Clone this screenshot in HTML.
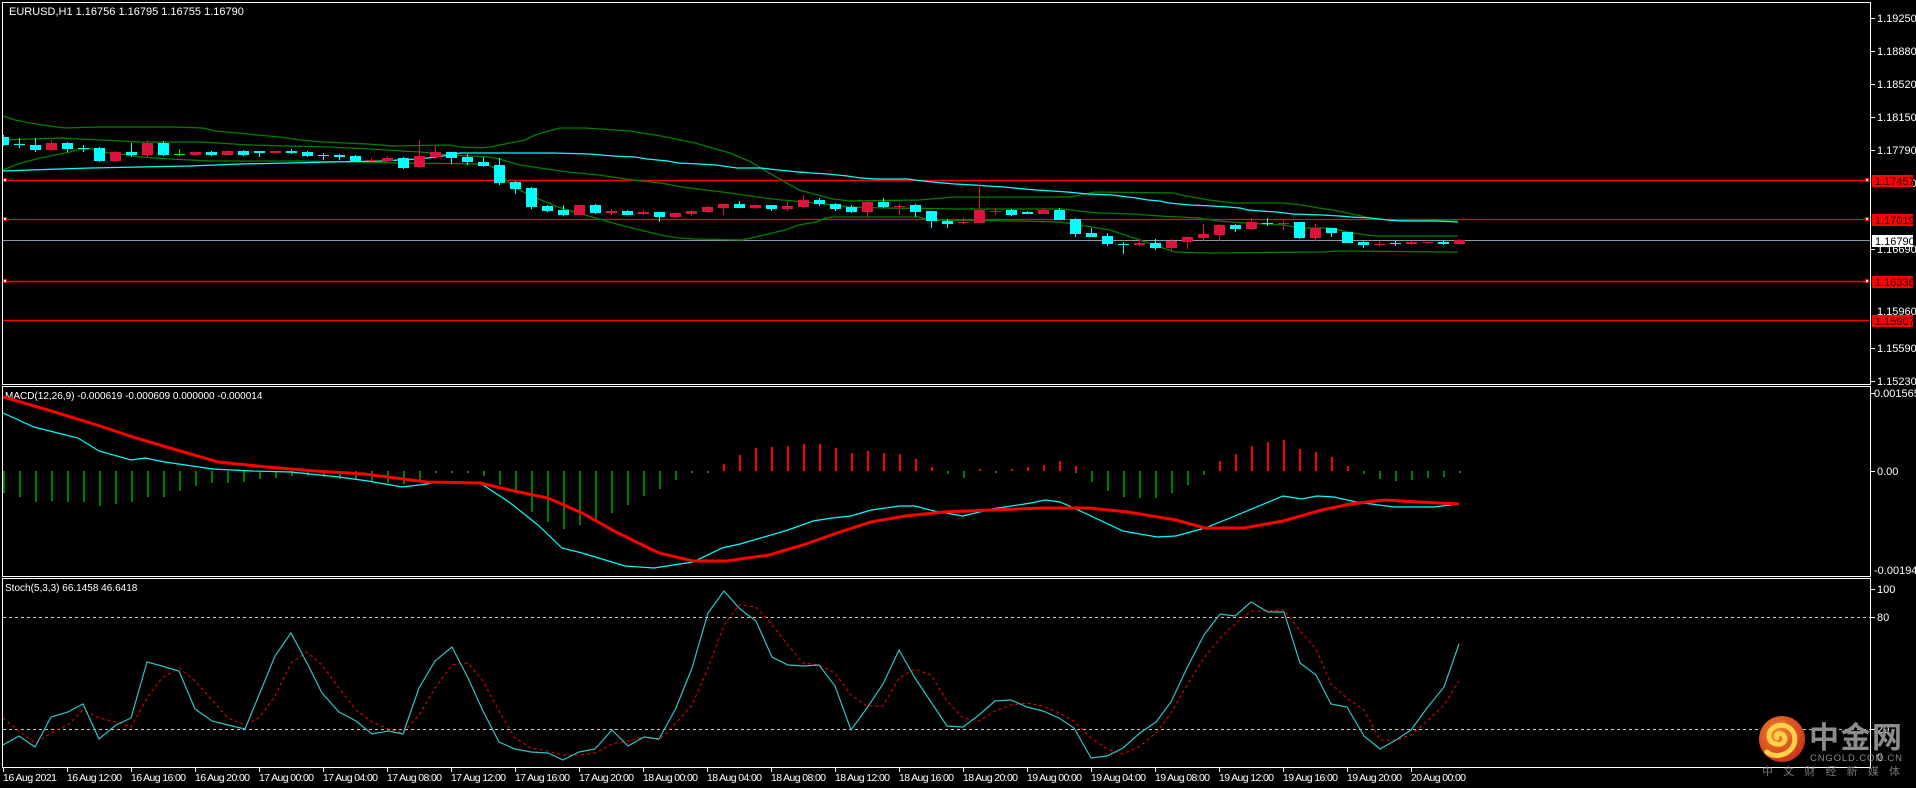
<!DOCTYPE html>
<html><head><meta charset="utf-8"><style>
html,body{margin:0;padding:0;background:#000;width:1916px;height:788px;overflow:hidden}
svg{display:block}
text{font-family:"Liberation Sans","Noto Sans CJK SC",sans-serif}
</style></head><body>
<svg width="1916" height="788" viewBox="0 0 1916 788" xmlns="http://www.w3.org/2000/svg">
<defs>
<clipPath id="cm"><rect x="3" y="3" width="1867" height="381"/></clipPath>
<clipPath id="cd"><rect x="3" y="387" width="1867" height="189"/></clipPath>
<clipPath id="cs"><rect x="3" y="579" width="1867" height="188"/></clipPath>
<radialGradient id="lg" cx="40%" cy="35%" r="70%"><stop offset="0" stop-color="#f5852a"/><stop offset="1" stop-color="#c8301a"/></radialGradient>
</defs>
<rect width="1916" height="788" fill="#000"/>
<!-- frames -->
<g fill="none" stroke="#fff" stroke-width="1">
<rect x="2.5" y="2.5" width="1868" height="382"/>
<rect x="2.5" y="386.5" width="1868" height="190"/>
<rect x="2.5" y="578.5" width="1868" height="189"/>
</g>
<text x="9" y="15" fill="#fff" font-size="11">EURUSD,H1  1.16756 1.16795 1.16755 1.16790</text>

<g clip-path="url(#cm)">
<!-- horizontal levels -->
<line x1="3" y1="180.5" x2="1870" y2="180.5" stroke="#f00" stroke-width="1.6"/>
<line x1="3" y1="219.5" x2="1870" y2="219.5" stroke="#f00" stroke-width="1.2"/>
<line x1="3" y1="240.5" x2="1870" y2="240.5" stroke="#8a9aaa" stroke-width="1"/>
<line x1="3" y1="281.5" x2="1870" y2="281.5" stroke="#f00" stroke-width="1.6"/>
<line x1="3" y1="320.5" x2="1870" y2="320.5" stroke="#f00" stroke-width="1.6"/>
<!-- bollinger -->
<g fill="none" stroke="#008000" stroke-width="1.3">
<polyline points="3,116 15,120 30,123 50,126 65,128 97,127 173,127 203,128 215,131 237,133 257,135 280,137 300,140 323,142 367,144 393,146 450,145 460,147 480,148 490,147 510,143 525,140 535,135 545,132 560,128 585,128 600,129 630,131 661,136 695,143 730,153 751,162 764,170 799,190 833,199 850,201 919,200 954,197 1070,197 1095,192 1174,193 1181,195 1209,200 1233,203 1284,203 1301,205 1319,208 1333,210 1343,212 1357,215 1370,218 1388,220 1458,220"/>
<polyline points="3,140 60,138 100,140 140,142 200,142 250,145 330,147 370,149 420,152 450,155 489,157 499,159 520,165 540,168 568,172 599,175 633,180 661,183 682,187 706,190 730,193 757,197 782,200 816,203 850,207 885,208 960,209 1064,209 1078,211 1100,213 1133,214 1160,216 1198,218 1218,221 1245,223 1284,225 1300,228 1330,228 1353,233 1374,236 1458,236"/>
<polyline points="3,170 15,165 25,162 40,158 55,155 70,152 80,149 92,149 100,152 120,154 140,157 170,159 210,161 300,161 350,162 400,163 485,164 494,168 503,177 513,187 534,197 558,207 592,217 620,225 640,230 661,235 678,238 695,239 742,240 751,238 764,235 785,230 799,225 816,222 826,218 833,217 919,217 930,220 1020,221 1060,222 1080,225 1110,230 1140,240 1160,247 1175,252 1210,253 1320,252 1340,251 1458,252"/>
</g>
<polyline fill="none" stroke="#00ffff" stroke-width="1.3" points="3,171 30,170 60,169 90,168 140,167 190,166 240,164 290,163 330,162 380,161 420,159 450,155 460,153 554,153 589,154 613,156 635,157 647,159 668,161 678,163 699,164 716,165 730,167 737,168 761,168 778,170 799,172 811,173 828,174 847,176 861,178 876,179 907,179 923,181 943,183 955,184 973,185 988,186 1004,187 1024,189 1036,190 1052,191 1067,192 1088,194 1112,195 1128,197 1136,198 1148,200 1160,201 1169,203 1179,204 1191,205 1212,206 1228,207 1240,208 1248,210 1260,211 1277,212 1293,214 1322,215 1339,216 1351,217 1370,218 1388,220 1403,221 1436,221 1458,222"/>
<!-- candles cyan -->
<g fill="#00ffff" stroke="#00ffff">
<g stroke-width="1">
<line x1="3.5" y1="135" x2="3.5" y2="146"/><line x1="35.5" y1="138" x2="35.5" y2="152"/><line x1="67.5" y1="142" x2="67.5" y2="152"/><line x1="99.5" y1="147" x2="99.5" y2="162"/><line x1="131.5" y1="143" x2="131.5" y2="157"/><line x1="163.5" y1="141" x2="163.5" y2="156"/><line x1="211.5" y1="151" x2="211.5" y2="156"/><line x1="243.5" y1="150" x2="243.5" y2="156"/><line x1="259.5" y1="151" x2="259.5" y2="157"/><line x1="291.5" y1="149" x2="291.5" y2="154"/><line x1="307.5" y1="151" x2="307.5" y2="157"/><line x1="339.5" y1="154" x2="339.5" y2="160"/><line x1="355.5" y1="155" x2="355.5" y2="162"/><line x1="403.5" y1="157" x2="403.5" y2="169"/><line x1="451.5" y1="152" x2="451.5" y2="164"/><line x1="467.5" y1="154" x2="467.5" y2="165"/><line x1="483.5" y1="157" x2="483.5" y2="167"/><line x1="499.5" y1="158" x2="499.5" y2="185"/><line x1="515.5" y1="181" x2="515.5" y2="194"/><line x1="531.5" y1="187" x2="531.5" y2="209"/><line x1="547.5" y1="205" x2="547.5" y2="212"/><line x1="563.5" y1="205" x2="563.5" y2="216"/><line x1="595.5" y1="204" x2="595.5" y2="214"/><line x1="627.5" y1="210" x2="627.5" y2="215"/><line x1="659.5" y1="212" x2="659.5" y2="222"/><line x1="739.5" y1="201" x2="739.5" y2="208"/><line x1="771.5" y1="205" x2="771.5" y2="211"/><line x1="819.5" y1="198" x2="819.5" y2="206"/><line x1="835.5" y1="203" x2="835.5" y2="211"/><line x1="851.5" y1="205" x2="851.5" y2="213"/><line x1="883.5" y1="198" x2="883.5" y2="208"/><line x1="915.5" y1="204" x2="915.5" y2="217"/><line x1="931.5" y1="211" x2="931.5" y2="228"/><line x1="947.5" y1="219" x2="947.5" y2="228"/><line x1="1011.5" y1="209" x2="1011.5" y2="216"/><line x1="1027.5" y1="211" x2="1027.5" y2="214"/><line x1="1059.5" y1="208" x2="1059.5" y2="220"/><line x1="1075.5" y1="218" x2="1075.5" y2="237"/><line x1="1091.5" y1="228" x2="1091.5" y2="237"/><line x1="1107.5" y1="233" x2="1107.5" y2="246"/><line x1="1155.5" y1="239" x2="1155.5" y2="250"/><line x1="1235.5" y1="224" x2="1235.5" y2="232"/><line x1="1299.5" y1="222" x2="1299.5" y2="239"/><line x1="1331.5" y1="228" x2="1331.5" y2="237"/><line x1="1347.5" y1="232" x2="1347.5" y2="243"/><line x1="1363.5" y1="241" x2="1363.5" y2="248"/><line x1="1443.5" y1="240" x2="1443.5" y2="245"/>
<line x1="19.5" y1="138" x2="19.5" y2="148"/><line x1="14" y1="144.5" x2="25" y2="144.5"/>
<line x1="83.5" y1="145" x2="83.5" y2="152"/><line x1="78" y1="148.5" x2="89" y2="148.5"/>
<line x1="323.5" y1="153" x2="323.5" y2="160"/><line x1="318" y1="155.5" x2="329" y2="155.5"/>
<line x1="1123.5" y1="242" x2="1123.5" y2="254"/><line x1="1118" y1="244.5" x2="1129" y2="244.5"/>
<line x1="1267.5" y1="218" x2="1267.5" y2="226"/><line x1="1262" y1="223.5" x2="1273" y2="223.5"/>
<line x1="1395.5" y1="240" x2="1395.5" y2="246"/><line x1="1390" y1="243.5" x2="1401" y2="243.5"/>
</g>
<g stroke="none">
<rect x="-2" y="137" width="11" height="8"/><rect x="30" y="145" width="11" height="5"/><rect x="62" y="143" width="11" height="6"/><rect x="94" y="148" width="11" height="13"/><rect x="126" y="152" width="11" height="3"/><rect x="158" y="143" width="11" height="12"/><rect x="206" y="152" width="11" height="3"/><rect x="238" y="151" width="11" height="4"/><rect x="254" y="151" width="11" height="2"/><rect x="286" y="151" width="11" height="2"/><rect x="302" y="152" width="11" height="4"/><rect x="334" y="155" width="11" height="2"/><rect x="350" y="156" width="11" height="5"/><rect x="398" y="158" width="11" height="10"/><rect x="446" y="152" width="11" height="6"/><rect x="462" y="157" width="11" height="5"/><rect x="478" y="162" width="11" height="4"/><rect x="494" y="165" width="11" height="18"/><rect x="510" y="182" width="11" height="7"/><rect x="526" y="188" width="11" height="19"/><rect x="542" y="206" width="11" height="5"/><rect x="558" y="210" width="11" height="5"/><rect x="590" y="205" width="11" height="8"/><rect x="622" y="211" width="11" height="4"/><rect x="654" y="212" width="11" height="5"/><rect x="734" y="204" width="11" height="4"/><rect x="766" y="205" width="11" height="4"/><rect x="814" y="200" width="11" height="4"/><rect x="830" y="204" width="11" height="5"/><rect x="846" y="207" width="11" height="5"/><rect x="878" y="202" width="11" height="5"/><rect x="910" y="205" width="11" height="7"/><rect x="926" y="211" width="11" height="10"/><rect x="942" y="221" width="11" height="3"/><rect x="1006" y="210" width="11" height="5"/><rect x="1022" y="212" width="11" height="2"/><rect x="1054" y="210" width="11" height="10"/><rect x="1070" y="219" width="11" height="15"/><rect x="1086" y="233" width="11" height="4"/><rect x="1102" y="236" width="11" height="8"/><rect x="1150" y="243" width="11" height="5"/><rect x="1230" y="225" width="11" height="4"/><rect x="1294" y="222" width="11" height="16"/><rect x="1326" y="228" width="11" height="5"/><rect x="1342" y="232" width="11" height="11"/><rect x="1358" y="242" width="11" height="3"/><rect x="1438" y="242" width="11" height="2"/>
</g>
</g>
<g stroke="#00ff00" stroke-width="1"><line x1="179.5" y1="149" x2="179.5" y2="156"/><line x1="174" y1="154.5" x2="185" y2="154.5"/></g>
<!-- candles red -->
<g fill="#dc143c" stroke="#dc143c">
<g stroke-width="1">
<line x1="51.5" y1="140" x2="51.5" y2="151"/><line x1="115.5" y1="151" x2="115.5" y2="162"/><line x1="147.5" y1="140" x2="147.5" y2="157"/><line x1="195.5" y1="152" x2="195.5" y2="156"/><line x1="227.5" y1="150" x2="227.5" y2="155"/><line x1="275.5" y1="151" x2="275.5" y2="153"/><line x1="387.5" y1="156" x2="387.5" y2="161"/><line x1="419.5" y1="140" x2="419.5" y2="168"/><line x1="435.5" y1="145" x2="435.5" y2="159"/><line x1="579.5" y1="205" x2="579.5" y2="215"/><line x1="611.5" y1="209" x2="611.5" y2="215"/><line x1="643.5" y1="210" x2="643.5" y2="215"/><line x1="675.5" y1="213" x2="675.5" y2="218"/><line x1="691.5" y1="210" x2="691.5" y2="216"/><line x1="707.5" y1="206" x2="707.5" y2="213"/><line x1="723.5" y1="204" x2="723.5" y2="215"/><line x1="755.5" y1="204" x2="755.5" y2="209"/><line x1="787.5" y1="201" x2="787.5" y2="211"/><line x1="803.5" y1="195" x2="803.5" y2="208"/><line x1="867.5" y1="201" x2="867.5" y2="217"/><line x1="979.5" y1="183" x2="979.5" y2="223"/><line x1="1043.5" y1="208" x2="1043.5" y2="214"/><line x1="1139.5" y1="240" x2="1139.5" y2="246"/><line x1="1171.5" y1="239" x2="1171.5" y2="251"/><line x1="1187.5" y1="236" x2="1187.5" y2="249"/><line x1="1203.5" y1="224" x2="1203.5" y2="241"/><line x1="1219.5" y1="224" x2="1219.5" y2="241"/><line x1="1251.5" y1="218" x2="1251.5" y2="230"/><line x1="1315.5" y1="224" x2="1315.5" y2="241"/><line x1="1411.5" y1="241" x2="1411.5" y2="245"/><line x1="1459.5" y1="239" x2="1459.5" y2="244"/>
<line x1="371.5" y1="158" x2="371.5" y2="162"/><line x1="366" y1="160.5" x2="377" y2="160.5"/>
<line x1="899.5" y1="204" x2="899.5" y2="215"/><line x1="894" y1="206.5" x2="905" y2="206.5"/>
<line x1="963.5" y1="218" x2="963.5" y2="224"/><line x1="958" y1="222.5" x2="969" y2="222.5"/>
<line x1="995.5" y1="208" x2="995.5" y2="215"/><line x1="990" y1="211.5" x2="1001" y2="211.5"/>
<line x1="1283.5" y1="220" x2="1283.5" y2="230"/><line x1="1278" y1="223.5" x2="1289" y2="223.5"/>
<line x1="1379.5" y1="241" x2="1379.5" y2="246"/><line x1="1374" y1="244.5" x2="1385" y2="244.5"/>
<line x1="1427.5" y1="240" x2="1427.5" y2="244"/><line x1="1422" y1="242.5" x2="1433" y2="242.5"/>
</g>
<g stroke="none">
<rect x="46" y="143" width="11" height="7"/><rect x="110" y="152" width="11" height="9"/><rect x="142" y="143" width="11" height="12"/><rect x="190" y="152" width="11" height="3"/><rect x="222" y="151" width="11" height="4"/><rect x="270" y="151" width="11" height="2"/><rect x="382" y="158" width="11" height="3"/><rect x="414" y="156" width="11" height="11"/><rect x="430" y="152" width="11" height="5"/><rect x="574" y="205" width="11" height="10"/><rect x="606" y="211" width="11" height="2"/><rect x="638" y="212" width="11" height="2"/><rect x="670" y="213" width="11" height="4"/><rect x="686" y="211" width="11" height="3"/><rect x="702" y="207" width="11" height="5"/><rect x="718" y="204" width="11" height="4"/><rect x="750" y="205" width="11" height="3"/><rect x="782" y="206" width="11" height="3"/><rect x="798" y="200" width="11" height="7"/><rect x="862" y="202" width="11" height="10"/><rect x="974" y="210" width="11" height="13"/><rect x="1038" y="210" width="11" height="4"/><rect x="1134" y="243" width="11" height="2"/><rect x="1166" y="241" width="11" height="7"/><rect x="1182" y="237" width="11" height="5"/><rect x="1198" y="234" width="11" height="4"/><rect x="1214" y="225" width="11" height="10"/><rect x="1246" y="222" width="11" height="7"/><rect x="1310" y="228" width="11" height="10"/><rect x="1406" y="242" width="11" height="2"/><rect x="1454" y="240" width="11" height="4"/>
</g>
</g>
</g>
<!-- level handles -->
<g fill="#fff" stroke="#f00" stroke-width="1">
<rect x="3.5" y="178.5" width="3" height="3"/><rect x="1865.5" y="178.5" width="3" height="3"/>
<rect x="3.5" y="217.5" width="3" height="3"/><rect x="1865.5" y="217.5" width="3" height="3"/>
<rect x="3.5" y="279.5" width="3" height="3"/><rect x="1865.5" y="279.5" width="3" height="3"/>
</g>

<!-- right axis main -->
<g stroke="#fff" stroke-width="1">
<line x1="1871" y1="18.5" x2="1875" y2="18.5"/><line x1="1871" y1="51.5" x2="1875" y2="51.5"/><line x1="1871" y1="84.5" x2="1875" y2="84.5"/><line x1="1871" y1="117.5" x2="1875" y2="117.5"/><line x1="1871" y1="150.5" x2="1875" y2="150.5"/><line x1="1871" y1="249.5" x2="1875" y2="249.5"/><line x1="1871" y1="348.5" x2="1875" y2="348.5"/><line x1="1871" y1="381.5" x2="1875" y2="381.5"/>
<line x1="1871" y1="471.5" x2="1875" y2="471.5"/><line x1="1871" y1="393.5" x2="1875" y2="393.5"/>
<line x1="1871" y1="589.5" x2="1875" y2="589.5"/><line x1="1871" y1="617.5" x2="1875" y2="617.5"/><line x1="1871" y1="729.5" x2="1875" y2="729.5"/>
</g>
<g fill="#fff" font-size="11">
<text x="1877" y="22">1.19250</text><text x="1877" y="55">1.18880</text><text x="1877" y="88">1.18520</text><text x="1877" y="121">1.18150</text><text x="1877" y="154">1.17790</text><text x="1877" y="187">1.17420</text><text x="1877" y="253">1.16690</text><text x="1877" y="315">1.15960</text><text x="1877" y="352">1.15590</text><text x="1877" y="385">1.15230</text>
<text x="1874" y="397">0.001565</text><text x="1877" y="475">0.00</text><text x="1874" y="574">-0.001946</text>
<text x="1877" y="593">100</text><text x="1877" y="621">80</text><text x="1877" y="733">20</text><text x="1877" y="761">0</text>
</g>
<g font-size="11">
<rect x="1872" y="175" width="41" height="12" fill="#f00"/><text x="1875" y="185" fill="#200">1.17457</text>
<rect x="1872" y="214" width="41" height="12" fill="#f00"/><text x="1875" y="224" fill="#200">1.17019</text>
<rect x="1872" y="235" width="41" height="12" fill="#fff"/><text x="1875" y="245" fill="#000">1.16790</text>
<rect x="1872" y="276" width="41" height="12" fill="#f00"/><text x="1875" y="286" fill="#200">1.16336</text>
<rect x="1872" y="315" width="41" height="12" fill="#f00"/><text x="1875" y="325" fill="#200">1.15907</text>
</g>

<!-- MACD -->
<text x="5" y="399" fill="#fff" font-size="10">MACD(12,26,9) -0.000619 -0.000609 0.000000 -0.000014</text>
<g clip-path="url(#cd)">
<g stroke="#008000" stroke-width="2">
<line x1="4" y1="471" x2="4" y2="493"/><line x1="20" y1="471" x2="20" y2="497"/><line x1="36" y1="471" x2="36" y2="502"/><line x1="52" y1="471" x2="52" y2="501"/><line x1="68" y1="471" x2="68" y2="502"/><line x1="84" y1="471" x2="84" y2="502"/><line x1="100" y1="471" x2="100" y2="506"/><line x1="116" y1="471" x2="116" y2="504"/><line x1="132" y1="471" x2="132" y2="502"/><line x1="148" y1="471" x2="148" y2="497"/><line x1="164" y1="471" x2="164" y2="497"/><line x1="180" y1="471" x2="180" y2="491"/><line x1="196" y1="471" x2="196" y2="486"/><line x1="212" y1="471" x2="212" y2="483"/><line x1="228" y1="471" x2="228" y2="483"/><line x1="244" y1="471" x2="244" y2="482"/><line x1="260" y1="471" x2="260" y2="479"/><line x1="276" y1="471" x2="276" y2="478"/><line x1="292" y1="471" x2="292" y2="476"/><line x1="308" y1="471" x2="308" y2="476"/><line x1="324" y1="471" x2="324" y2="477"/><line x1="340" y1="471" x2="340" y2="479"/><line x1="356" y1="471" x2="356" y2="480"/><line x1="372" y1="471" x2="372" y2="482"/><line x1="388" y1="471" x2="388" y2="483"/><line x1="404" y1="471" x2="404" y2="484"/><line x1="420" y1="471" x2="420" y2="480"/><line x1="436" y1="471" x2="436" y2="473"/><line x1="452" y1="471" x2="452" y2="473"/><line x1="468" y1="471" x2="468" y2="473"/><line x1="484" y1="471" x2="484" y2="476"/><line x1="500" y1="471" x2="500" y2="485"/><line x1="516" y1="471" x2="516" y2="491"/><line x1="532" y1="471" x2="532" y2="512"/><line x1="548" y1="471" x2="548" y2="522"/><line x1="564" y1="471" x2="564" y2="529"/><line x1="580" y1="471" x2="580" y2="525"/><line x1="596" y1="471" x2="596" y2="522"/><line x1="612" y1="471" x2="612" y2="513"/><line x1="628" y1="471" x2="628" y2="505"/><line x1="644" y1="471" x2="644" y2="496"/><line x1="660" y1="471" x2="660" y2="489"/><line x1="676" y1="471" x2="676" y2="480"/><line x1="692" y1="471" x2="692" y2="473"/><line x1="708" y1="471" x2="708" y2="473"/>
<line x1="948" y1="471" x2="948" y2="474"/><line x1="964" y1="471" x2="964" y2="478"/><line x1="996" y1="471" x2="996" y2="473"/><line x1="1076" y1="471" x2="1076" y2="473"/><line x1="1092" y1="471" x2="1092" y2="482"/><line x1="1108" y1="471" x2="1108" y2="491"/><line x1="1124" y1="471" x2="1124" y2="497"/><line x1="1140" y1="471" x2="1140" y2="498"/><line x1="1156" y1="471" x2="1156" y2="498"/><line x1="1172" y1="471" x2="1172" y2="493"/><line x1="1188" y1="471" x2="1188" y2="485"/><line x1="1204" y1="471" x2="1204" y2="475"/><line x1="1364" y1="471" x2="1364" y2="474"/><line x1="1380" y1="471" x2="1380" y2="479"/><line x1="1396" y1="471" x2="1396" y2="481"/><line x1="1412" y1="471" x2="1412" y2="480"/><line x1="1428" y1="471" x2="1428" y2="478"/><line x1="1444" y1="471" x2="1444" y2="477"/><line x1="1460" y1="471" x2="1460" y2="473"/>
</g>
<g stroke="#f00" stroke-width="2">
<line x1="724" y1="471" x2="724" y2="464"/><line x1="740" y1="471" x2="740" y2="455"/><line x1="756" y1="471" x2="756" y2="448"/><line x1="772" y1="471" x2="772" y2="447"/><line x1="788" y1="471" x2="788" y2="446"/><line x1="804" y1="471" x2="804" y2="444"/><line x1="820" y1="471" x2="820" y2="444"/><line x1="836" y1="471" x2="836" y2="448"/><line x1="852" y1="471" x2="852" y2="453"/><line x1="868" y1="471" x2="868" y2="451"/><line x1="884" y1="471" x2="884" y2="453"/><line x1="900" y1="471" x2="900" y2="454"/><line x1="916" y1="471" x2="916" y2="459"/><line x1="932" y1="471" x2="932" y2="467"/><line x1="980" y1="471" x2="980" y2="469"/><line x1="1012" y1="471" x2="1012" y2="469"/><line x1="1028" y1="471" x2="1028" y2="467"/><line x1="1044" y1="471" x2="1044" y2="465"/><line x1="1060" y1="471" x2="1060" y2="461"/><line x1="1076" y1="471" x2="1076" y2="466"/><line x1="1220" y1="471" x2="1220" y2="461"/><line x1="1236" y1="471" x2="1236" y2="454"/><line x1="1252" y1="471" x2="1252" y2="446"/><line x1="1268" y1="471" x2="1268" y2="442"/><line x1="1284" y1="471" x2="1284" y2="440"/><line x1="1300" y1="471" x2="1300" y2="449"/><line x1="1316" y1="471" x2="1316" y2="452"/><line x1="1332" y1="471" x2="1332" y2="457"/><line x1="1348" y1="471" x2="1348" y2="466"/>
</g>
<polyline fill="none" stroke="#00ffff" stroke-width="1.2" points="3,413 34,427 78,438 99,451 131,460 145,458 165,462 213,469 252,471 291,472 339,477 368,481 402,487 427,484 436,482 480,483 509,502 538,525 562,548 582,553 625,566 654,568 693,562 722,548 740,544 788,530 813,521 832,518 851,516 871,510 900,506 915,506 934,511 963,516 992,509 1031,503 1045,500 1060,502 1074,508 1123,531 1157,537 1176,536 1205,528 1230,518 1283,496 1302,499 1317,496 1334,497 1356,502 1394,507 1433,507 1459,504"/>
<polyline fill="none" stroke="#f00" stroke-width="3" points="3,397 48,410 97,425 136,438 170,448 218,462 267,467 315,471 364,474 427,482 480,483 514,491 548,498 582,513 616,532 659,553 693,561 727,561 740,559 769,555 803,545 837,533 871,522 905,516 944,512 992,510 1041,508 1089,508 1128,512 1176,520 1205,528 1244,528 1283,521 1322,510 1351,504 1385,500 1419,502 1459,504"/>
</g>

<!-- Stochastic -->
<text x="5" y="591" fill="#fff" font-size="10">Stoch(5,3,3) 66.1458 46.6418</text>
<g clip-path="url(#cs)">
<g stroke="#c8c8c8" stroke-width="1" stroke-dasharray="3,3">
<line x1="3" y1="617.5" x2="1870" y2="617.5"/><line x1="3" y1="729.5" x2="1870" y2="729.5"/>
</g>
<polyline fill="none" stroke="#f00" stroke-width="1" stroke-dasharray="3,3" points="3,718 19,731 35,743 51,733 68,725 83,710 99,718 116,722 131,727 147,698 162,678 179,668 195,681 212,700 228,718 245,725 259,718 275,696 291,663 307,652 322,665 339,688 356,710 372,722 388,729 403,733 419,715 435,688 452,665 468,663 483,681 499,711 515,738 531,748 548,751 563,755 579,755 595,753 612,744 628,741 644,737 659,740 676,723 692,705 708,668 724,625 739,605 756,607 772,625 788,645 803,663 819,665 835,673 851,695 867,706 883,706 899,678 915,669 931,675 947,701 963,718 979,721 995,711 1011,705 1027,703 1043,706 1059,713 1074,721 1091,738 1107,749 1123,754 1140,746 1156,733 1171,713 1187,685 1204,658 1220,638 1235,624 1251,611 1268,611 1284,610 1300,631 1316,649 1331,684 1347,698 1364,710 1380,740 1396,740 1411,735 1427,721 1444,705 1459,681"/>
<polyline fill="none" stroke="#30c4c4" stroke-width="1.2" points="3,745 19,736 35,747 51,717 68,712 83,704 99,739 116,725 131,718 147,662 162,666 179,671 195,709 212,721 228,725 245,729 259,695 275,656 291,633 307,663 322,693 339,712 356,721 372,734 388,731 403,734 419,688 435,661 452,647 468,678 483,711 499,742 515,749 531,752 548,753 563,760 579,752 595,749 612,730 628,746 644,737 659,739 676,708 692,668 708,613 724,591 740,609 756,621 772,657 788,665 803,666 819,665 835,686 851,730 867,708 883,684 899,650 915,678 931,702 947,726 963,727 979,715 995,701 1011,700 1027,707 1043,711 1059,718 1074,728 1091,758 1107,756 1123,748 1140,733 1156,722 1171,702 1187,668 1204,635 1220,614 1235,616 1251,602 1268,612 1284,612 1300,663 1316,675 1331,704 1347,707 1364,736 1380,749 1396,740 1411,730 1427,708 1444,687 1459,644"/>
</g>

<!-- time axis -->
<g stroke="#fff" stroke-width="1">
<line x1="3.5" y1="767" x2="3.5" y2="772"/><line x1="67.5" y1="767" x2="67.5" y2="772"/><line x1="131.5" y1="767" x2="131.5" y2="772"/><line x1="195.5" y1="767" x2="195.5" y2="772"/><line x1="259.5" y1="767" x2="259.5" y2="772"/><line x1="323.5" y1="767" x2="323.5" y2="772"/><line x1="387.5" y1="767" x2="387.5" y2="772"/><line x1="451.5" y1="767" x2="451.5" y2="772"/><line x1="515.5" y1="767" x2="515.5" y2="772"/><line x1="579.5" y1="767" x2="579.5" y2="772"/><line x1="643.5" y1="767" x2="643.5" y2="772"/><line x1="707.5" y1="767" x2="707.5" y2="772"/><line x1="771.5" y1="767" x2="771.5" y2="772"/><line x1="835.5" y1="767" x2="835.5" y2="772"/><line x1="899.5" y1="767" x2="899.5" y2="772"/><line x1="963.5" y1="767" x2="963.5" y2="772"/><line x1="1027.5" y1="767" x2="1027.5" y2="772"/><line x1="1091.5" y1="767" x2="1091.5" y2="772"/><line x1="1155.5" y1="767" x2="1155.5" y2="772"/><line x1="1219.5" y1="767" x2="1219.5" y2="772"/><line x1="1283.5" y1="767" x2="1283.5" y2="772"/><line x1="1347.5" y1="767" x2="1347.5" y2="772"/><line x1="1411.5" y1="767" x2="1411.5" y2="772"/>
</g>
<g fill="#fff" font-size="10.5">
<text x="3" y="781" textLength="54">16 Aug 2021</text><text x="67" y="781" textLength="55">16 Aug 12:00</text><text x="131" y="781" textLength="55">16 Aug 16:00</text><text x="195" y="781" textLength="55">16 Aug 20:00</text><text x="259" y="781" textLength="55">17 Aug 00:00</text><text x="323" y="781" textLength="55">17 Aug 04:00</text><text x="387" y="781" textLength="55">17 Aug 08:00</text><text x="451" y="781" textLength="55">17 Aug 12:00</text><text x="515" y="781" textLength="55">17 Aug 16:00</text><text x="579" y="781" textLength="55">17 Aug 20:00</text><text x="643" y="781" textLength="55">18 Aug 00:00</text><text x="707" y="781" textLength="55">18 Aug 04:00</text><text x="771" y="781" textLength="55">18 Aug 08:00</text><text x="835" y="781" textLength="55">18 Aug 12:00</text><text x="899" y="781" textLength="55">18 Aug 16:00</text><text x="963" y="781" textLength="55">18 Aug 20:00</text><text x="1027" y="781" textLength="55">19 Aug 00:00</text><text x="1091" y="781" textLength="55">19 Aug 04:00</text><text x="1155" y="781" textLength="55">19 Aug 08:00</text><text x="1219" y="781" textLength="55">19 Aug 12:00</text><text x="1283" y="781" textLength="55">19 Aug 16:00</text><text x="1347" y="781" textLength="55">19 Aug 20:00</text><text x="1411" y="781" textLength="55">20 Aug 00:00</text>
</g>

<!-- logo -->
<circle cx="1782" cy="739" r="23" fill="url(#lg)"/>
<path d="M1792,748 C1800,736 1790,722 1777,726 C1767,729 1766,742 1776,744 C1784,746 1788,738 1782,734 C1778,732 1774,736 1777,738 M1792,748 C1786,756 1774,758 1767,752" fill="none" stroke="#ffd24a" stroke-width="5" stroke-linecap="round"/>
<text x="1809" y="748" fill="#8c8c8c" font-size="30" font-weight="bold" font-family="'Noto Sans CJK SC',sans-serif" textLength="93">中金网</text>
<text x="1810" y="761" fill="#8c8c8c" font-size="9.5" textLength="92">CNGOLD.COM.CN</text>
<text x="1762" y="775" fill="#777" font-size="11" font-family="'Noto Sans CJK SC',sans-serif" textLength="138">中 文 财 经 新 媒 体</text>
</svg>
</body></html>
